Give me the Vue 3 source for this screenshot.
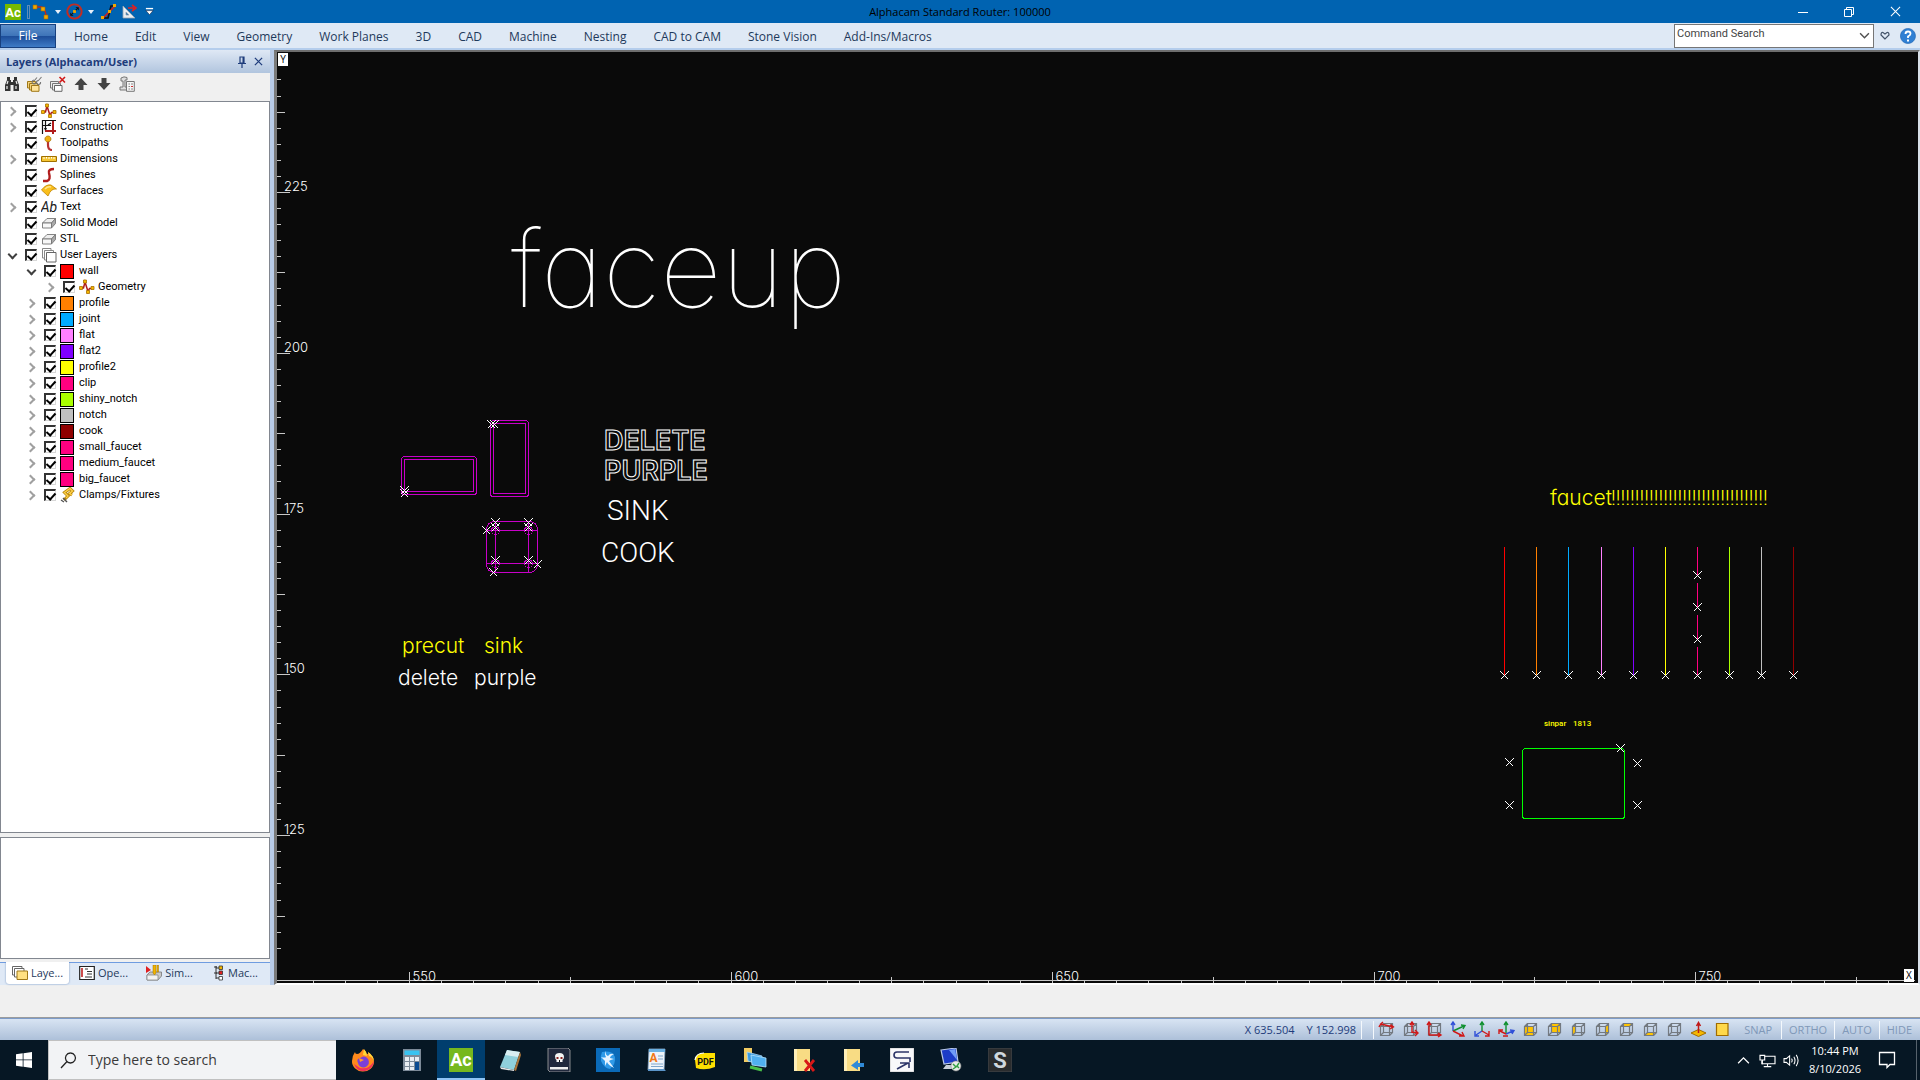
<script setup>
import { h, reactive, ref } from 'vue'

/* Each icon: [viewBox width, viewBox height, shapes]; a shape is [path, fill, stroke, stroke width]
   or { t: text, x, y, size, fill, ... } */
const cube = 'M2.5 5.5H11.5V14.5H2.5ZM5.5 2.5H14.5V11.5H5.5ZM2.5 5.5L5.5 2.5M11.5 5.5L14.5 2.5M11.5 14.5L14.5 11.5M2.5 14.5L5.5 11.5'
const grey = '#737980'
const cubeLines = [cube, 'none', grey, 1.2]
const gold = '#ffc400'

const icons = {
  ac: [16, 16, [['M0 0H16V16H0Z', '#76b900'], { t: 'Ac', x: 8, y: 13, size: 13, fill: '#fff', weight: 700 }]],
  arc: [18, 16, [['M3 3H10Q14 6 14 13', 'none', '#c0281c', 1.4], ['M1 1H5V5H1ZM9 3H13V7H9ZM12 11H16V15H12Z', '#f0a800', '#a86400', 0.6]]],
  circle: [18, 18, [['M9 1.500A7.500 7.500 0 1 1 8.900 1.500', 'none', '#c42c20', 2], ['M6.500 11.500L11.500 6.500', 'none', '#101010', 1.2], ['M4.500 10V13.500H8ZM10 4.500H13.500V8Z', '#101010'], ['M7.500 7.500H10.500V10.500H7.500Z', '#f0a800']]],
  spline: [18, 16, [['M3 14H8L11 2H16', 'none', '#101010', 1.6], ['M2 15L16 1', 'none', '#d02020', 1.6], ['M1 12H4V15H1ZM13 0H16V3H13ZM8 6H11V9H8Z', '#f0a800']]],
  setsq: [16, 16, [['M2 2V14H14ZM5 8V11H8Z', '#e8edf2', '#9aa6b0', 0.8], ['M7 4H13M11 1L15 4L11 7', 'none', '#e02020', 1.6]]],
  caret: [8, 8, [['M1 2H7L4 6Z', '#e8f0fa']]],
  more: [10, 10, [['M1 1H9V2.500H1Z', '#fff'], ['M1 4H9L5 8.500Z', '#fff', '#102040', 0.6]]],
  min: [12, 12, [['M1 6.500H11', 'none', '#fff', 1]]],
  restore: [12, 12, [['M1.500 3.500H8.500V10.500H1.500ZM3.500 3.500V1.500H10.500V8.500H8.500', 'none', '#fff', 1]]],
  close: [12, 12, [['M1 1L11 11M11 1L1 11', 'none', '#fff', 1.1]]],
  down: [10, 8, [['M1 2L5 6L9 2', 'none', '#505050', 1.3]]],
  heart: [10, 9, [['M5 8L1 4Q1 1 3 1.500L5 3L7 1.500Q9 1 9 4Z', 'none', '#44546a', 1.2]]],
  help: [16, 16, [['M8 .5A7.500 7.500 0 1 1 7.900 .5', '#2f7fd3', '#1b5fae', 0.6], ['M5.500 6Q5.500 3.500 8 3.500Q10.500 3.500 10.500 5.700Q10.500 7 8 8.500V10', 'none', '#fff', 1.8], ['M7 11.500H9V13.500H7Z', '#fff']]],
  pin: [10, 12, [['M3 1H7V7H3ZM1 7.500H9M5 8V12', 'none', '#1e3c7b', 1.2], ['M5.500 1H7V7H5.500Z', '#1e3c7b']]],
  x: [10, 10, [['M1 1L9 9M9 1L1 9', 'none', '#1e3c7b', 1.4]]],
  find: [16, 16, [['M3 1H6V4H7V6H9V4H10V1H13V4L15 9V15H9.500V9H6.500V15H1V9L3 4Z', '#333'], ['M3 10V13M12 10V13M4 5L3 8M12 5L13 8', 'none', '#eee', 1.2]]],
  layerEdit: [17, 16, [['M1.500 5.500H9.500V12H1.500Z', '#f3d27a', '#a07818', 1], ['M3.500 7.500H11.500V14H3.500Z', '#f3d27a', '#a07818', 1], ['M5.500 9.500H13V15.300H5.500Z', '#ffe49a', '#a07818', 1], ['M8 5L11 1.500M12 5L15.500 1M8 4A2 2 0 1 0 10 6.500M12 4.500A2 2 0 1 0 14.500 6', 'none', '#777', 1.1]]],
  layerDel: [17, 16, [['M1.500 5.500H9.500V12H1.500Z', '#eee', '#777', 1], ['M3.500 7.500H11.500V14H3.500Z', '#eee', '#777', 1], ['M5.500 9.500H13V15.300H5.500Z', '#fff', '#666', 1], ['M10.500 1L16 6.500M16 1L10.500 6.500', 'none', '#d01818', 1.6]]],
  up: [14, 14, [['M7 1L13.500 8H9.500V13H4.500V8H.5Z', '#444']]],
  dn: [14, 14, [['M7 13L.5 6H4.500V1H9.500V6H13.500Z', '#444']]],
  props: [16, 16, [['M2 2Q5 0 8 1.500V4H6V11H10V14H1V11H4V5H2Z', '#ddd', '#777', 1], ['M7.500 5.500H15.300V15.300H7.500Z', '#f6f6f6', '#777', 1], ['M9.500 8H11M12 8H14M9.500 10.500H11M9.500 13H11M12 13H14', 'none', '#888', 1], ['M12 10.500H14', 'none', '#d03030', 1.2]]],
  geometry: [16, 16, [['M2 9H4.500L6 3L9 12.500L10.500 9.500H13', 'none', '#b01c1c', 1.5], ['M.5 7.500H3.500V10.500H.5ZM4.500 1H7.500V4H4.500ZM7.500 11.500H10.500V14.500H7.500ZM12 7.500H15V10.500H12Z', '#f5b800', '#a86e00', 0.8]]],
  construction: [16, 16, [['M1.500 15V1.500H15', 'none', '#111', 1.2], ['M4.500 1V12M1 6.500H10', 'none', '#111', 1.2], ['M3 9L4.500 12L6 9Z', '#111'], ['M12 2V15M4 12H15', 'none', '#b01c1c', 2], ['M7 6L10 4', 'none', '#111', 1.5]]],
  toolpath: [16, 16, [['M7 6V10Q7 15 11 15', 'none', '#b83232', 2.2], ['M7 1A3 3 0 1 1 6.900 1', '#f0b010', '#a87400', 0.8]]],
  dimension: [16, 16, [['M.5 5.500H15.500V10.500H.5Z', '#f5c531', '#a07000', 1], ['M3 6V8M5.500 6V7.500M8 6V8M10.500 6V7.500M13 6V8', 'none', '#fff', 1]]],
  splines: [16, 16, [['M13 2Q7 2 8 6Q10 13 6 14L2 14', 'none', '#b01c1c', 2.4]]],
  surface: [16, 16, [['M.5 7Q5 1 10 2L15.500 6Q10 5 7 13Z', '#f9bf1c', '#c08400', 0.8], ['M4 6Q7 3 10 4', 'none', '#ffe58a', 1.6]]],
  ab: [16, 16, [{ t: 'Ab', x: 8, y: 13, size: 14, fill: '#222', italic: true }]],
  solid: [16, 16, [['M1.500 8L6 3.500H14.500L10.500 8Z', '#eee', '#777', 0.9], ['M1.500 8H10.500V13H1.500Z', '#f8f8f8', '#777', 0.9], ['M10.500 8L14.500 3.500V8.500L10.500 13Z', '#aaa', '#777', 0.9]]],
  layers: [16, 16, [['M1.500 1.500H10V11H1.500Z', '#fff', '#888', 1], ['M3.500 3.500H12.500V13H3.500Z', '#fff', '#888', 1], ['M5.500 5.500H15V15H5.500Z', '#fff', '#666', 1]]],
  clamp: [16, 16, [['M12 8L9.500 6.500L12.500 4L10 1.500L4.500 5.500L8 9L4 13', 'none', '#b8860b', 3], ['M12 8L9.500 6.500L12.500 4L10 1.500L4.500 5.500L8 9L6 11', 'none', '#ffd24a', 1.4], ['M3 11L7 15M1 13L4 15', 'none', '#555', 1.4]]],
  tabLayers: [16, 16, [['M.5 1.500H10V10H.5Z', '#fff', '#666', 1], ['M2.500 3.500H12V12H2.500Z', '#fff', '#666', 1], ['M5 6H15.500V14.500H5Z', '#ffe082', '#a07818', 1]]],
  tabOps: [16, 16, [['M.7 1.500H15.300V14.500H.7Z', '#fff', '#222', 1.2], ['M3 3V12', 'none', '#c02020', 1.6], ['M6 4H9M8 6.500H13M8 9H13M6 12H13', 'none', '#333', 1]]],
  tabSim: [16, 16, [['M1 10L4 7H15.500V11L12 15H1Z', '#c8c8c8', '#777', 0.8], ['M1 10H12V15H1Z', '#f2f2f2', '#888', 0.8], ['M7 0V8L8.500 10L10 8V0ZM11 0V7H12.500V0Z', '#f0b400', '#a07000', 0.5], ['M0 1L5 5L0 8Z', '#e02020']]],
  tabMac: [12, 16, [['M3 1V14M3 3H7M3 8H7M3 13H7', 'none', '#333', 1], ['M6 1H9.500V4.500H6Z', '#f0b400', '#333', 0.8], ['M6 6H9.500V9.500H6Z', '#e02020', '#333', 0.8], ['M6 11.500H9.500V15H6Z', '#fff', '#333', 0.8], ['M1 2H4M1 8H4', 'none', '#333', 1]]],
  v1: [17, 17, [cubeLines, ['M1 6Q2 3 5 3.500L15 6M5 1L2 3.500M12.500 3.500L15.500 6L12 8', 'none', '#d01818', 1.3]]],
  v2: [17, 17, [cubeLines, ['M10 12V2M8 4L10 1L12 4M10 11L15 12M13 9L16 12L13 15', 'none', '#d01818', 1.4]]],
  v3: [17, 17, [cubeLines, ['M3 14V2M1 4L3 1L5 4M3 14H14M12 12L15 14L12 16', 'none', '#d01818', 1.4]]],
  v4: [17, 17, [['M3 10V2M1 4L3 1L5 4', 'none', '#3050d8', 1.4], ['M3 10L14 5M11 4L15 4.500L13 8', 'none', '#109030', 1.4], ['M3 10L13 15M9 15L14 15L12 11', 'none', '#d01818', 1.4]]],
  v5: [17, 17, [['M8 10V2M6 4L8 1L10 4', 'none', '#109030', 1.4], ['M8 10L2 14M1 10V15H5', 'none', '#3050d8', 1.4], ['M8 10L15 14M15 10V15H11', 'none', '#d01818', 1.4]]],
  v6: [17, 17, [['M8 12V2M6 4L8 1L10 4', 'none', '#109030', 1.4], ['M8 13L15 10M12 9L16 9.500L14 13', 'none', '#3050d8', 1.4], ['M8 13L2 10M1 13V9H5M5 15H10', 'none', '#d01818', 1.4]]],
  v7: [17, 17, [['M2.500 5.500H11.500V14.500H2.500Z', gold], cubeLines]],
  v8: [17, 17, [['M5.500 2.500H14.500V11.500H5.500Z', gold], cubeLines]],
  v9: [17, 17, [['M2.500 5.500L5.500 2.500V11.500L2.500 14.500Z', gold], cubeLines]],
  v10: [17, 17, [['M11.500 5.500L14.500 2.500V11.500L11.500 14.500Z', gold], cubeLines]],
  v11: [17, 17, [['M2.500 5.500L5.500 2.500H14.500L11.500 5.500Z', gold], cubeLines]],
  v12: [17, 17, [['M2.500 14.500L5.500 11.500H14.500L11.500 14.500Z', gold], cubeLines]],
  v13: [17, 17, [cubeLines]],
  v14: [17, 17, [['M1 12L8.500 8.500L16 12L8.500 15.500Z', '#f5b800', '#a06c00', 1], ['M8.500 12V3M6.500 5L8.500 1.500L10.500 5', 'none', '#c01818', 1.5]]],
  v15: [17, 17, [['M2.500 2.500H14V14.500H2.500Z', '#ffd84a', '#a06c00', 1.2]]],
  win: [16, 16, [['M0 2.300L6.700 1.300V7.500H0ZM7.500 1.200L16 0V7.500H7.500ZM0 8.300H6.700V14.700L0 13.700ZM7.500 8.300H16V16L7.500 14.800Z', '#fff']]],
  lens: [17, 17, [['M10.500 1A5 5 0 1 1 10.400 1M7 9.500L1 16', 'none', '#222', 1.3]]],
  firefox: [24, 24, [['M12 1Q15 3 16 6Q18 6 17 4Q23 8 23 14A11 10 0 0 1 1 13Q1 8 4 4Q4 6 6 6Q9 6 12 1Z', '#ff8a1c'], ['M17 4Q23 8 23 14Q22 9 18 8ZM13 1Q16 4 16 8L12 7Z', '#ffd83a'], ['M3 16Q6 24 14 23Q22 21 23 13Q18 22 9 20Z', '#f0305a'], ['M12 8.500A5.500 5.500 0 1 1 7 15Q5 11 9 10Z', '#7a3fd8'], ['M8 10L13 12L9 14Z', '#ff9a2c']]],
  calc: [20, 24, [['M1 1H19V23H1Z', '#7c8a98'], ['M2.500 2.500H17.500V7H2.500Z', '#39c3f0'], ['M3 9H7V13H3ZM8 9H12V13H8ZM13 9H17V13H13ZM3 14H7V18H3ZM8 14H12V18H8ZM3 19H7V22H3ZM8 19H12V22H8Z', '#e8edf2'], ['M13 14H17V22H13Z', '#0a4a90']]],
  acBig: [24, 24, [['M0 0H24V24H0Z', '#76b81e'], { t: 'Ac', x: 12, y: 18, size: 18, fill: '#fff', weight: 700 }]],
  note: [24, 24, [['M9 2L22 4L16 22L2 19Z', '#8fd0dc'], ['M9 2L22 4L20 9L7 7Z', '#d8eef2'], ['M22 4L23 7L18 23L16 22Z', '#a8743a'], ['M2 19L16 22V23L3 21Z', '#e8e8e8']]],
  skull: [24, 24, [['M1 0H21L23 2V24H3L1 22Z', '#20283c', '#a8a8a8', 0.8], ['M8 8Q8.500 5 12.500 5Q17 5 17 9Q17 11 15.500 12V14H9.500V12Q8 11 8 8Z', '#f4f4f4'], ['M9.500 9H11.500V11H9.500ZM13.500 9H15.500V11H13.500Z', '#8a2020'], ['M12 12H13V14H12Z', '#111'], ['M3 19H21V21.500H3Z', '#eee']]],
  bird: [24, 24, [['M0 0H24V24H0Z', '#0a6ab8'], ['M6 4Q16 2 19 9Q20 16 14 21Q8 20 5 13Q4 8 6 4Z', '#2f9ae8'], ['M10 3Q9 7 12 8Q14 5 18 6Q14 8 14 10L18 11Q14 12 13 13L18 20Q12 17 11 14L9 18L9 13L5 9Q9 10 10 9Q8 6 10 3Z', '#e8f4ff']]],
  wordpad: [24, 24, [['M4 1H20L19 22H3Z', '#eef4fa', '#88a8c8', 0.8], ['M4 1H20V4H4Z', '#6cb2e4'], ['M13 8H18M13 11H18M6 16H18M6 18.500H18', 'none', '#7ea6cc', 1.2], ['M3 21H19L21 23H3Z', '#5a94c8'], { t: 'A', x: 8.500, y: 14, size: 12, fill: '#f07818', weight: 700 }]],
  pdf: [24, 24, [['M1 12Q2 5 10 5H21V19Q11 23 2 20Z', '#ffe000'], ['M1 12Q2 5 10 5', 'none', '#fff', 1.2], { t: 'PDF', x: 11.500, y: 17, size: 9, fill: '#111', weight: 700 }]],
  netfold: [24, 24, [['M1 0H9V14H1Z', '#f2cc62'], ['M4 4L19 8V17L5 13Z', '#3a9ae0', '#a8d8f8', 0.8], ['M8 7L23 10V19L9 17Z', '#50b0f0', '#b8e4ff', 0.8], ['M7 19L19 22', 'none', '#48c048', 3]]],
  folderX: [24, 24, [['M2 1H18V23H2Z', '#f8dc84'], ['M2 1H5V23H2Z', '#ffefb8'], ['M13 12L22 23M22 12L13 23', 'none', '#d81818', 2.800]]],
  folderB: [24, 24, [['M3 1H19V23H3Z', '#f8dc84'], ['M3 1H6V23H3Z', '#ffefb8'], ['M23 15H17V12L10 17.500L17 22V19H23Z', '#2f8ad8']]],
  sbox: [24, 24, [['M0 0H24V24H0Z', '#f8f8fa', '#aaa', 0.6], ['M19 4H7Q4 4 4 7Q4 10 7 10H20V14', 'none', '#2c3468', 1.6], ['M7 21L18 15M10 15H19V20', 'none', '#2c3468', 1.6]]],
  remote: [24, 24, [['M2 2L17 0L19 14L5 16Z', '#1c3cc8', '#b8c8e8', 1.2], ['M10 2L16 1L18 12Z', '#6f9cf8'], ['M7 17L14 17L13 21H4Z', '#c8d0d8'], ['M17 13A5 5 0 1 1 16.900 13', '#e8ece8', '#888', 0.6], ['M14 16L17 19L14 21M20 15L18 18L20 20', 'none', '#30a040', 1.4]]],
  sdark: [24, 24, [['M0 0H24V24H0Z', '#2a2c2e', '#44484c', 1], { t: 'S', x: 12, y: 20, size: 22, fill: '#d0d8de', weight: 700 }]],
  trayUp: [14, 10, [['M1 8L7 2L13 8', 'none', '#fff', 1.4]]],
  net: [18, 16, [['M6 3.500H17V11.500H3V8M5 14.500H13M9 12V14', 'none', '#fff', 1.2], ['M1 2.500H6V7.500H1ZM3.500 7.500V12', 'none', '#fff', 1.2]]],
  vol: [18, 16, [['M1 6H3.500L7 3V13L3.500 10H1Z', 'none', '#fff', 1.1], ['M9 6Q10.500 8 9 10M11.500 4Q14 8 11.500 12M14 2Q18 8 14 14', 'none', '#fff', 1.1]]],
  chat: [18, 18, [['M1.500 1.500H16.500V13.500H12L9 16.500V13.500H1.500Z', 'none', '#fff', 1.3]]]
}

const Glyph = ({ name, size = 16 }) => {
  const [w, ht, shapes] = icons[name]
  return h('svg', { viewBox: `0 0 ${w} ${ht}`, width: Math.round((size * w) / ht), height: size, 'aria-hidden': 'true' },
    shapes.map((s) => Array.isArray(s)
      ? h('path', { d: s[0], fill: s[1], stroke: s[2] || 'none', 'stroke-width': s[3] || 0, 'fill-rule': 'evenodd' })
      : h('text', { x: s.x, y: s.y, 'font-size': s.size, fill: s.fill, 'font-weight': s.weight || 400, 'font-style': s.italic ? 'italic' : 'normal', 'text-anchor': 'middle', 'font-family': 'Roboto, "Open Sans", sans-serif' }, s.t)))
}
Glyph.props = ['name', 'size']

const ribbon = ['Home', 'Edit', 'View', 'Geometry', 'Work Planes', '3D', 'CAD', 'Machine', 'Nesting', 'CAD to CAM', 'Stone Vision', 'Add-Ins/Macros']
const search = ref('Command Search')

const tools = [['find', 'Find'], ['layerEdit', 'Edit layer'], ['layerDel', 'Delete layer'], ['up', 'Move up'], ['dn', 'Move down'], ['props', 'Properties']]

const n = (label, icon, level, arrow, color) => ({ label, icon, level, arrow, color, on: true })
const tree = reactive([
  n('Geometry', 'geometry', 0, 'closed'),
  n('Construction', 'construction', 0, 'closed'),
  n('Toolpaths', 'toolpath', 0),
  n('Dimensions', 'dimension', 0, 'closed'),
  n('Splines', 'splines', 0),
  n('Surfaces', 'surface', 0),
  n('Text', 'ab', 0, 'closed'),
  n('Solid Model', 'solid', 0),
  n('STL', 'solid', 0),
  n('User Layers', 'layers', 0, 'open'),
  n('wall', null, 1, 'open', '#ff0000'),
  n('Geometry', 'geometry', 2, 'closed'),
  n('profile', null, 1, 'closed', '#ff8000'),
  n('joint', null, 1, 'closed', '#00aaff'),
  n('flat', null, 1, 'closed', '#ff80ff'),
  n('flat2', null, 1, 'closed', '#8000ff'),
  n('profile2', null, 1, 'closed', '#ffff00'),
  n('clip', null, 1, 'closed', '#ff0080'),
  n('shiny_notch', null, 1, 'closed', '#aaff00'),
  n('notch', null, 1, 'closed', '#c0c0c0'),
  n('cook', null, 1, 'closed', '#900000'),
  n('small_faucet', null, 1, 'closed', '#ff0080'),
  n('medium_faucet', null, 1, 'closed', '#ff0080'),
  n('big_faucet', null, 1, 'closed', '#ff0080'),
  n('Clamps/Fixtures', 'clamp', 1, 'closed')
])

const panelTabs = [['tabLayers', 'Laye...'], ['tabOps', 'Ope...'], ['tabSim', 'Sim...'], ['tabMac', 'Mac...']]

/* Rulers: one tick per tenth of a labelled step */
const snapPx = (v) => Math.round(v) + 0.5
const yTicks = Array.from({ length: 55 }, (_, k) => {
  const i = k - 7
  const kind = i % 10 === 0 ? 13 : i % 5 === 0 ? 8 : 4
  return { p: snapPx(140 + i * 16.08), len: kind, label: i % 10 === 0 ? 225 - i * 2.5 : null }
})
const xTicks = Array.from({ length: 50 }, (_, k) => {
  const i = k - 3
  const kind = i % 10 === 0 ? 11 : i % 5 === 0 ? 6 : 2
  return { p: snapPx(132 + i * 32.15), len: kind, label: i % 10 === 0 ? 550 + i * 5 : null }
})

const marks = [
  [404, 490], [404, 493], [491, 424], [494, 424],
  [495, 522], [495, 527], [528, 522], [528, 527], [486, 530], [495, 560], [528, 560], [537, 564], [493, 572],
  [1620, 748], [1509, 762], [1509, 805], [1637, 763], [1637, 805],
  [1697, 575], [1697, 607], [1697, 639]
]
const bars = [
  [1504, '#ff0000'], [1536, '#ff8000'], [1568, '#00aaff'], [1601, '#ff80ff'], [1633, '#8000ff'], [1665, '#ffff00'],
  [1697, '#ff0080', '28 8 24 8 24 8 28'], [1729, '#aaff00'], [1761, '#c0c0c0'], [1793, '#900000']
]
const cross = (x, y) => `M${x - 3.5} ${y - 3.5}l8 8m0 -8l-8 8`
const holes = [[495.5, 530.5], [528.5, 530.5], [495.5, 563.5], [528.5, 563.5]]
const bangs = '!'.repeat(33)

const views = Array.from({ length: 15 }, (_, i) => 'v' + (i + 1))
const modes = ['SNAP', 'ORTHO', 'AUTO', 'HIDE']
const apps = ['firefox', 'calc', 'acBig', 'note', 'skull', 'bird', 'wordpad', 'pdf', 'netfold', 'folderX', 'folderB', 'sbox', 'remote', 'sdark']
</script>

<template>
  <div class="app">
    <header class="titlebar">
      <div class="quick">
        <Glyph name="ac" :size="16" />
        <i class="grip"></i>
        <button aria-label="Arc"><Glyph name="arc" :size="16" /></button>
        <button class="car" aria-label="Arc options"><Glyph name="caret" :size="8" /></button>
        <button aria-label="Circle"><Glyph name="circle" :size="17" /></button>
        <button class="car" aria-label="Circle options"><Glyph name="caret" :size="8" /></button>
        <button class="wide" aria-label="Spline"><Glyph name="spline" :size="16" /></button>
        <button class="wide" aria-label="Set square"><Glyph name="setsq" :size="16" /></button>
        <button class="wide" aria-label="Customise"><Glyph name="more" :size="9" /></button>
      </div>
      <h1>Alphacam Standard Router: 100000</h1>
      <div class="winctl">
        <button aria-label="Minimise"><Glyph name="min" :size="12" /></button>
        <button aria-label="Restore"><Glyph name="restore" :size="12" /></button>
        <button aria-label="Close"><Glyph name="close" :size="11" /></button>
      </div>
    </header>

    <nav class="ribbon">
      <button class="file">File</button>
      <div class="rtabs">
        <button v-for="r in ribbon" :key="r" class="rtab">{{ r }}</button>
      </div>
      <div class="rright">
        <div class="cmd">
          <input v-model="search" aria-label="Command Search" type="text" />
          <button aria-label="Show commands"><Glyph name="down" :size="9" /></button>
        </div>
        <button class="fav" aria-label="Favourites"><Glyph name="heart" :size="9" /></button>
        <button class="hlp" aria-label="Help"><Glyph name="help" :size="16" /></button>
      </div>
    </nav>

    <main class="work">
      <aside class="panel">
        <div class="phead">
          <h2>Layers (Alphacam/User)</h2>
          <button aria-label="Pin"><Glyph name="pin" :size="12" /></button>
          <button aria-label="Close panel"><Glyph name="x" :size="9" /></button>
        </div>
        <div class="ptools">
          <button v-for="t in tools" :key="t[0]" :aria-label="t[1]"><Glyph :name="t[0]" :size="t[0] === 'up' || t[0] === 'dn' ? 14 : 16" /></button>
        </div>
        <ul class="tree">
          <li v-for="(row, i) in tree" :key="i" :class="'lv' + row.level">
            <span class="arrow" :class="row.arrow"></span>
            <input :id="'layer' + i" v-model="row.on" type="checkbox" />
            <span v-if="row.color" class="swatch" :style="{ background: row.color }"></span>
            <Glyph v-else :name="row.icon" :size="16" />
            <label :for="'layer' + i">{{ row.label }}</label>
          </li>
        </ul>
        <div class="detail"></div>
        <div class="ptabs">
          <button v-for="(t, i) in panelTabs" :key="t[1]" :class="{ on: i === 0 }"><Glyph :name="t[0]" :size="16" />{{ t[1] }}</button>
        </div>
      </aside>

      <section class="view">
        <svg class="canvas" role="img" aria-label="Drawing">
          <g class="ruler">
            <path v-for="t in yTicks" :key="'y' + t.p" :d="`M0 ${t.p}h${t.len}`" />
            <svg y="100%" height="12" overflow="visible">
              <path d="M0 -2.5H1638" />
              <path v-for="t in xTicks" :key="'x' + t.p" :d="`M${t.p} 0v${-t.len}`" />
              <template v-for="t in xTicks" :key="'xl' + t.p">
                <text v-if="t.label" :x="t.p + 3" y="-2">{{ t.label }}</text>
              </template>
            </svg>
            <template v-for="t in yTicks" :key="'yl' + t.p">
              <text v-if="t.label" x="7" :y="t.p - 2">{{ t.label }}</text>
            </template>
          </g>
          <g transform="translate(-277 -52)">
            <g class="purple">
              <rect x="401.5" y="456.5" width="75" height="38" rx="3" />
              <rect x="404.5" y="459.5" width="69" height="32" />
              <rect x="490.5" y="420.5" width="38" height="76" rx="3" />
              <rect x="493.5" y="423.5" width="32" height="70" />
              <rect x="486.5" y="521.5" width="51" height="51" rx="8" />
              <path d="M495.5 522V572M528.5 522V572M487 530.5H537M487 563.5H537" />
              <circle v-for="c in holes" :key="c.join()" :cx="c[0]" :cy="c[1]" r="4" />
            </g>
            <path v-for="b in bars" :key="b[0]" class="bar" :d="`M${b[0] + 0.5} 547V675`" :stroke="b[1]" :stroke-dasharray="b[2]" />
            <rect class="green" x="1522.5" y="748.5" width="102" height="70" rx="3" />
            <path v-for="m in marks" :key="m.join()" class="mark" :d="cross(m[0], m[1])" />
            <path v-for="b in bars" :key="'m' + b[0]" class="mark" :d="cross(b[0], 675)" />

            <text class="t huge" x="511" y="307">faceup</text>
            <text class="t outline" x="604" y="450">DELETE</text>
            <text class="t outline" x="604" y="480">PURPLE</text>
            <text class="t caps" x="607" y="520">SINK</text>
            <text class="t caps" x="601" y="562">COOK</text>
            <text class="t mid yellow" x="402" y="653">precut</text>
            <text class="t mid yellow" x="484" y="653">sink</text>
            <text class="t mid" x="398" y="685">delete</text>
            <text class="t mid" x="474" y="685">purple</text>
            <text class="t mid yellow" x="1550" y="505">faucet</text>
            <text class="t bang yellow" x="1611" y="505">{{ bangs }}</text>
            <text class="t tiny yellow" x="1544" y="726">sinpar</text>
            <text class="t tiny yellow" x="1573" y="726">1813</text>
          </g>
        </svg>
        <span class="axis ay">Y</span>
        <span class="axis ax">X</span>
      </section>
    </main>

    <div class="prompt"></div>

    <footer class="status">
      <span class="coord">X 635.504</span>
      <span class="coord">Y 152.998</span>
      <i class="sep"></i>
      <i class="sep second"></i>
      <button v-for="v in views" :key="v" class="vbtn" :aria-label="'View ' + v"><Glyph :name="v" :size="17" /></button>
      <button v-for="m in modes" :key="m" class="mode">{{ m }}</button>
    </footer>

    <div class="taskbar">
      <button class="start" aria-label="Start"><Glyph name="win" :size="16" /></button>
      <label class="tsearch">
        <Glyph name="lens" :size="17" />
        <input type="text" placeholder="Type here to search" aria-label="Type here to search" />
      </label>
      <div class="apps">
        <button v-for="a in apps" :key="a" :class="{ on: a === 'acBig' }" :aria-label="a"><Glyph :name="a" :size="24" /></button>
      </div>
      <div class="tray">
        <button aria-label="Hidden icons"><Glyph name="trayUp" :size="9" /></button>
        <button aria-label="Network"><Glyph name="net" :size="15" /></button>
        <button aria-label="Volume"><Glyph name="vol" :size="15" /></button>
        <div class="clock"><span>10:44 PM</span><span>8/10/2026</span></div>
        <button class="chat" aria-label="Notifications"><Glyph name="chat" :size="18" /></button>
        <i class="peek"></i>
      </div>
    </div>
  </div>
</template>

<style>
body { margin: 0; background: #0a0a0a; }
</style>

<style scoped>
.app {
  display: flex;
  flex-direction: column;
  min-height: 100vh;
  font: 11px/16px "Open Sans", "Noto Sans", sans-serif;
  color: #000;
  background: #f0f0f0;
}
.app * { box-sizing: border-box; }
button {
  display: flex;
  align-items: center;
  justify-content: center;
  padding: 0;
  border: 0;
  background: none;
  font: inherit;
  color: inherit;
  white-space: nowrap;
}
svg { flex: none; display: block; }
h1, h2, ul { margin: 0; padding: 0; }

.titlebar {
  display: grid;
  grid-template-columns: 1fr auto 1fr;
  align-items: center;
  height: 23px;
  background: #0063b1;
}
.titlebar h1 { font-size: 11px; font-weight: 400; }
.quick { display: flex; align-items: center; padding-left: 5px; }
.grip { width: 3px; height: 14px; margin: 0 2px 0 6px; border: 1px solid #5e8db8; }
.car { width: 16px; }
.quick .wide { width: 20px; }
.winctl { display: flex; justify-content: flex-end; padding-right: 2px; }
.winctl button { width: 46px; height: 23px; }

.ribbon {
  display: flex;
  align-items: center;
  height: 27px;
  background: #dfe9f5;
  border-bottom: 2px solid #b4cdec;
  font-size: 12px;
}
.file {
  width: 56px;
  height: 24px;
  color: #fff;
  border: 1px solid #17407f;
  background: linear-gradient(#5e8fcb 0, #3f75b9 48%, #1c4c98 50%, #3e7bc6 100%);
}
.rtabs { display: flex; gap: 27px; padding: 2px 0 0 18px; }
.rtab { height: 24px; color: #1e395b; }
.rright { display: flex; align-items: center; margin-left: auto; height: 25px; }
.cmd {
  display: flex;
  width: 200px;
  height: 24px;
  border: 1px solid #767676;
  background: #fff;
}
.cmd input { flex: 1; min-width: 0; height: 18px; padding: 0 2px; border: 0; outline: 0; font: 11px/16px Roboto, sans-serif; color: #444; background: none; }
.cmd button { width: 17px; }
.fav { width: 22px; }
.hlp { width: 24px; }

.work { display: flex; flex: 1; min-height: 0; }
.panel {
  display: flex;
  flex-direction: column;
  width: 274px;
  border-right: 4px solid #b9cce8;
  background: #f0f0f0;
}
.phead {
  display: flex;
  align-items: center;
  height: 23px;
  padding: 0 3px 0 6px;
  color: #1e3c7b;
  background: linear-gradient(#dfe8f5, #b1c5de);
}
.phead h2 { flex: 1; font-size: 11px; font-weight: 700; }
.phead button { width: 17px; height: 20px; }
.ptools { display: flex; align-items: center; height: 28px; padding-bottom: 6px; }
.ptools button { width: 23px; height: 22px; }
.tree {
  flex: 1;
  list-style: none;
  padding-top: 1px;
  border: 1px solid #828790;
  background: #fff;
  font: 11px/16px Roboto, sans-serif;
}
.tree li { display: flex; align-items: center; height: 16px; padding-left: 4px; }
.tree .lv1 { padding-left: 23px; }
.tree .lv2 { padding-left: 42px; }
.arrow { position: relative; width: 19px; height: 16px; }
.arrow::before {
  content: "";
  position: absolute;
  left: 3px;
  top: 5px;
  width: 5px;
  height: 5px;
  border: solid #a0a0a0;
  border-width: 2px 2px 0 0;
  transform: rotate(45deg);
  display: none;
}
.arrow.closed::before, .arrow.open::before { display: block; }
.arrow.open::before { top: 4px; left: 4px; border-color: #404040; transform: rotate(135deg); }
.tree input {
  appearance: none;
  position: relative;
  width: 12px;
  height: 12px;
  margin: 0 4px 0 1px;
  border: solid #333;
  border-width: 2px 1px 1px 2px;
  border-right-color: #d8d8d8;
  border-bottom-color: #d8d8d8;
  background: #fff;
}
.tree input:checked::after {
  content: "";
  position: absolute;
  left: 2px;
  top: 0;
  width: 4px;
  height: 7px;
  border: solid #000;
  border-width: 0 2px 2px 0;
  transform: rotate(42deg);
}
.tree svg { margin-right: 3px; }
.swatch { width: 14px; height: 15px; margin-right: 5px; border: 1px solid #000; }
.detail { height: 122px; margin-top: 4px; border: 1px solid #828790; background: #fff; }
.ptabs {
  display: flex;
  height: 23px;
  margin-top: 3px;
  padding-left: 6px;
  border-top: 1px solid #6f9ce0;
  background: #dfe9f6;
  color: #1e395b;
}
.ptabs button { width: 63px; margin-right: 3px; height: 20px; gap: 3px; }
.ptabs .on { margin-top: -1px; height: 22px; background: #fff; border-radius: 0 0 3px 3px; box-shadow: 0 0 2px #6c8ab8; clip-path: inset(0 -3px -3px -3px); }

.view {
  position: relative;
  display: flex;
  flex: 1;
  min-width: 0;
  border: 2px solid #7a7a7a;
  border-width: 2px 2px 2px 3px;
  border-color: #6e6e6e #d8dfe8 #fff #7a7a7a;
  background: #0a0a0a;
}
.canvas { flex: 1; width: 100%; min-width: 0; overflow: hidden; }
.ruler path { stroke: #c8c8c8; fill: none; shape-rendering: crispEdges; }
.ruler text { fill: #fff; font: 300 13px Inter, sans-serif; }
.purple { fill: none; stroke: #c800c8; shape-rendering: crispEdges; }
.green { fill: none; stroke: #0f0; shape-rendering: crispEdges; }
.bar { shape-rendering: crispEdges; }
.mark { stroke: #fff; fill: none; shape-rendering: crispEdges; }
.t { fill: #fff; font-family: Inter, sans-serif; font-weight: 300; font-feature-settings: "cv11"; }
.t.yellow { fill: #ff0; }
.huge { font-size: 107px; font-weight: 100; }
.outline { font-size: 27px; font-weight: 600; fill: none; stroke: #fff; stroke-width: 1px; }
.caps { font: 300 28px Roboto, sans-serif; }
.mid { font-size: 21px; }
.bang { font: 300 21px Roboto, sans-serif; }
.tiny { font: 500 8px Roboto, sans-serif; }
.axis {
  position: absolute;
  width: 10px;
  height: 13px;
  background: #fff;
  font-size: 10px;
  line-height: 13px;
  text-align: center;
}
.ay { left: 1px; top: 1px; }
.ax { right: 4px; bottom: 1px; }

.prompt { height: 33px; border-bottom: 1px solid #9c9c9c; background: #f0f0f0; }
.status {
  display: flex;
  align-items: center;
  justify-content: flex-end;
  height: 22px;
  padding-right: 1px;
  border-top: 1px solid #7d9bc8;
  background: linear-gradient(#d8e4f3, #adc0d9);
  color: #1e3c7b;
}
.coord { margin-right: 12px; }
.sep { width: 1px; height: 18px; background: #f4f8fc; margin-left: -7px; }
.sep.second { margin: 0 0 0 11px; }
.vbtn { width: 24px; height: 20px; }
.mode { padding: 0 7px; height: 18px; color: #8098b8; border-left: 1px solid #f4f8fc; }
.vbtn + .mode { padding: 0 9px 0 10px; border-left: 0; }

.taskbar { display: flex; height: 40px; background: #061724; color: #fff; }
.start { width: 48px; }
.tsearch {
  display: flex;
  align-items: center;
  width: 288px;
  margin-right: 3px;
  padding-left: 11px;
  gap: 11px;
  border: 1px solid #c0c0c0;
  border-right: 0;
  background: #f2f3f5;
}
.tsearch input { flex: 1; min-width: 0; border: 0; outline: 0; padding: 0; background: none; font: 14px/20px "Open Sans", sans-serif; }
.tsearch input::placeholder { color: #3a3a3a; opacity: 1; }
.apps { display: flex; gap: 1px; }
.apps button { width: 48px; }
.apps .on { background: #003e6e; box-shadow: inset 0 -2px #8fc4f4; }
.tray { display: flex; align-items: center; margin-left: auto; height: 40px; }
.tray button { width: 24px; height: 40px; }
.clock { display: flex; flex-direction: column; align-items: center; width: 62px; padding-left: 2px; line-height: 18px; }
.tray .chat { width: 44px; }
.peek { width: 1px; height: 40px; margin: 0 3px 0 7px; background: #56626c; }
</style>
